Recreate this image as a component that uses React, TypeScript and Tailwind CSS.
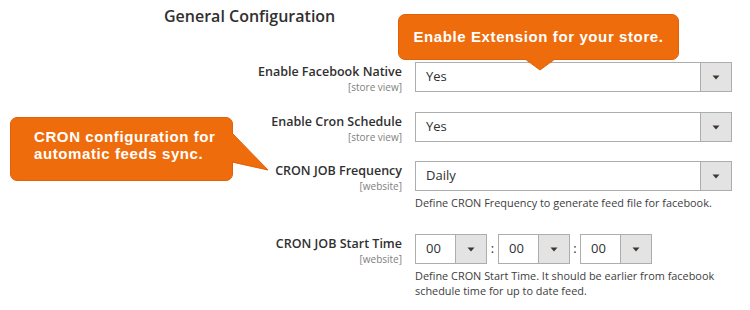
import React from "react";

const font = { fontFamily: '"Open Sans", "Noto Sans", sans-serif' };

function Arrow() {
  return (
    <svg width="8" height="5" viewBox="0 0 8 5" className="block">
      <path d="M0.5 0.5 L7.5 0.5 L4 4.5 Z" fill="#41362f" />
    </svg>
  );
}

function Select({ value, className = "" }: { value: string; className?: string }) {
  return (
    <div className={`flex h-[30px] border border-[#adadad] bg-white ${className}`}>
      <div className="flex-1 flex items-center pl-[10px] text-[13px] text-[#303030]">{value}</div>
      <div className="w-[31px] flex items-center justify-center bg-[#e3e3e3] border-l border-[#adadad]">
        <Arrow />
      </div>
    </div>
  );
}

function Label({ title, scope }: { title: string; scope: string }) {
  return (
    <div className="h-[30px] flex flex-col items-end pt-[1px]">
      <div className="text-[12.5px] font-semibold text-[#303030] leading-[18px] whitespace-nowrap">{title}</div>
      <div className="text-[10px] text-[#808080] leading-[12px] whitespace-nowrap">{scope}</div>
    </div>
  );
}

export default function App() {
  return (
    <div className="relative w-[750px] h-[310px] bg-white overflow-hidden" style={font}>
      <div className="pl-[164px] pt-[5px] text-[16px] font-semibold text-[#303030] leading-[22px]">
        General Configuration
      </div>

      <div className="mt-[35px] grid grid-cols-[402px_317px] gap-x-[13px] items-start">
        <Label title="Enable Facebook Native" scope="[store view]" />
        <Select value="Yes" />

        <div className="col-span-2 h-[20px]" />
        <Label title="Enable Cron Schedule" scope="[store view]" />
        <Select value="Yes" />

        <div className="col-span-2 h-[19px]" />
        <Label title="CRON JOB Frequency" scope="[website]" />
        <div>
          <Select value="Daily" />
          <div className="mt-[4px] text-[10.9px] leading-[15px] text-[#3d3d3d] whitespace-nowrap">
            Define CRON Frequency to generate feed file for facebook.
          </div>
        </div>

        <div className="col-span-2 h-[24px]" />
        <Label title="CRON JOB Start Time" scope="[website]" />
        <div>
          <div className="flex items-center">
            <Select value="00" className="w-[72px]" />
            <div className="w-[11px] text-center text-[13px] text-[#303030]">:</div>
            <Select value="00" className="w-[72px]" />
            <div className="w-[10px] text-center text-[13px] text-[#303030]">:</div>
            <Select value="00" className="w-[72px]" />
          </div>
          <div className="mt-[4px] text-[10.9px] leading-[15px] text-[#3d3d3d]">
            <div className="whitespace-nowrap">Define CRON Start Time. It should be earlier from facebook</div>
            <div className="whitespace-nowrap">schedule time for up to date feed.</div>
          </div>
        </div>
      </div>

      {/* Top callout */}
      <div className="absolute left-[398px] top-[14px] w-[281px] h-[46px]">
        <div
          className="w-full h-full rounded-[7px] bg-[#ef6c0c] border border-[#e06208] flex items-center justify-center text-white text-[15px] font-bold tracking-[0.6px]"
          style={{ fontFamily: '"Liberation Sans", Arial, sans-serif' }}
        >
          Enable Extension for your store.
        </div>
        <svg className="absolute left-[126px] top-[45px]" width="32" height="12" viewBox="0 0 32 12">
          <path d="M1 0 L16 11 L31 0 Z" fill="#ef6c0c" />
          <path d="M1 0 L16 11 L31 0" fill="none" stroke="#e06208" strokeWidth="1" />
        </svg>
      </div>

      {/* Left callout */}
      <div className="absolute left-[10px] top-[117px] w-[223px] h-[64px]">
        <div
          className="w-full h-full rounded-[7px] bg-[#ef6c0c] border border-[#e06208] pl-[23px] pt-[10px] text-white text-[15px] font-bold leading-[17px] tracking-[0.6px]"
          style={{ fontFamily: '"Liberation Sans", Arial, sans-serif' }}
        >
          <div>CRON configuration for</div>
          <div>automatic feeds sync.</div>
        </div>
        <svg className="absolute left-[221px] top-[15px]" width="40" height="40" viewBox="0 0 40 40">
          <path d="M0 0 L37 38 L0 30 Z" fill="#ef6c0c" />
          <path d="M1 1 L37 38 L1 30" fill="none" stroke="#e06208" strokeWidth="1" />
        </svg>
      </div>
    </div>
  );
}
